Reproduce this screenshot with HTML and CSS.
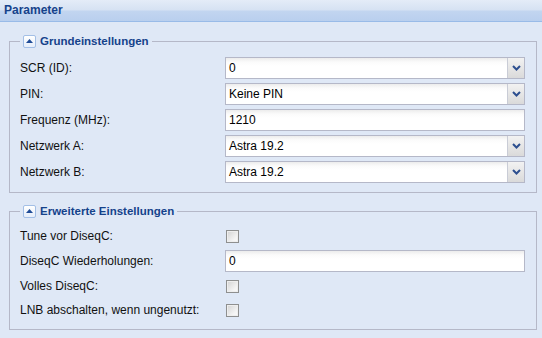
FILE: index.html
```html
<!DOCTYPE html>
<html>
<head>
<meta charset="utf-8">
<link rel="stylesheet" href="styles.css">
</head>
<body>
<div class="panel">
  <div class="panel-header">Parameter</div>
  <div class="panel-body">
    <fieldset class="fs fs-first">
      <legend class="fs-legend">
        <span class="tool"><svg width="7" height="4" viewBox="0 0 7 4"><polygon points="0,4 7,4 3.5,0" fill="#1f4c97"/></svg></span>
        <span class="legend-text">Grundeinstellungen</span>
      </legend>
      <div class="row">
        <span class="lbl">SCR (ID):</span>
        <div class="field combo"><span class="val">0</span><span class="trigger"><svg width="9" height="6" viewBox="0 0 9 6"><polyline points="1,1 4.5,4.5 8,1" fill="none" stroke="#2d4f8f" stroke-width="2"/></svg></span></div>
      </div>
      <div class="row">
        <span class="lbl">PIN:</span>
        <div class="field combo"><span class="val">Keine PIN</span><span class="trigger"><svg width="9" height="6" viewBox="0 0 9 6"><polyline points="1,1 4.5,4.5 8,1" fill="none" stroke="#2d4f8f" stroke-width="2"/></svg></span></div>
      </div>
      <div class="row">
        <span class="lbl">Frequenz (MHz):</span>
        <div class="field text"><span class="val">1210</span></div>
      </div>
      <div class="row">
        <span class="lbl">Netzwerk A:</span>
        <div class="field combo"><span class="val">Astra 19.2</span><span class="trigger"><svg width="9" height="6" viewBox="0 0 9 6"><polyline points="1,1 4.5,4.5 8,1" fill="none" stroke="#2d4f8f" stroke-width="2"/></svg></span></div>
      </div>
      <div class="row">
        <span class="lbl">Netzwerk B:</span>
        <div class="field combo"><span class="val">Astra 19.2</span><span class="trigger"><svg width="9" height="6" viewBox="0 0 9 6"><polyline points="1,1 4.5,4.5 8,1" fill="none" stroke="#2d4f8f" stroke-width="2"/></svg></span></div>
      </div>
    </fieldset>
    <fieldset class="fs fs-second">
      <legend class="fs-legend">
        <span class="tool"><svg width="7" height="4" viewBox="0 0 7 4"><polygon points="0,4 7,4 3.5,0" fill="#1f4c97"/></svg></span>
        <span class="legend-text">Erweiterte Einstellungen</span>
      </legend>
      <div class="row row-check">
        <span class="lbl">Tune vor DiseqC:</span>
        <span class="check"></span>
      </div>
      <div class="row">
        <span class="lbl">DiseqC Wiederholungen:</span>
        <div class="field text"><span class="val">0</span></div>
      </div>
      <div class="row row-check">
        <span class="lbl">Volles DiseqC:</span>
        <span class="check"></span>
      </div>
      <div class="row row-check">
        <span class="lbl">LNB abschalten, wenn ungenutzt:</span>
        <span class="check"></span>
      </div>
    </fieldset>
  </div>
</div>
</body>
</html>
```

FILE: styles.css
```css
* { box-sizing: border-box; }
html, body {
  margin: 0;
  padding: 0;
  background: #dfe8f6;
  font-family: "Liberation Sans", Arial, sans-serif;
  font-size: 12px;
  color: #000;
}
.panel {
  width: 542px;
  height: 338px;
  background: #dfe8f6;
}
.panel-header {
  height: 22px;
  border-bottom: 1px solid #99bbe8;
  background: linear-gradient(#e4ecf8 0, #d6e2f3 10px, #c2d5f0 11px, #b9cfee 21px);
  color: #15428b;
  font-weight: bold;
  font-size: 12px;
  line-height: 21px;
  padding-left: 4px;
}
.panel-body {
  padding: 0 5px 0 9px;
}
.fs {
  margin: 12px 0 0 0;
  border: 1px solid #b5b8c8;
  padding: 9px 11px 5px 10px;
  min-width: 0;
}
.fs-second {
  margin-top: 11px;
  padding-top: 8px;
}
.fs-legend {
  padding: 0 3px;
  height: 14px;
  display: flex;
  align-items: center;
}
.tool {
  width: 13px;
  height: 13px;
  border: 1px solid #a3bfe6;
  border-radius: 2px;
  background: linear-gradient(#ffffff, #e6eefa);
  display: inline-flex;
  align-items: center;
  justify-content: center;
  margin-right: 4px;
}
.tool svg { display: block; margin-top: -1px; }
.legend-text {
  color: #15428b;
  font-weight: bold;
  font-size: 11.5px;
  line-height: 14px;
}
.row {
  display: flex;
  align-items: center;
  height: 22px;
  margin-bottom: 4px;
}
.row-check {
  height: 20px;
}
.lbl {
  width: 205px;
  flex: none;
  color: #111;
}
.field {
  width: 300px;
  height: 22px;
  border: 1px solid #b5b8c8;
  background: linear-gradient(#ececec 0, #fbfbfb 4px, #fff 8px);
  display: flex;
  align-items: stretch;
}
.val {
  flex: 1;
  padding-left: 3px;
  line-height: 20px;
  color: #000;
}
.trigger {
  width: 17px;
  flex: none;
  background: linear-gradient(#f2f2f2, #dadada);
  border-left: 1px solid #c9ccd6;
  display: flex;
  align-items: center;
  justify-content: center;
}
.trigger svg { display: block; }
.check {
  width: 13px;
  height: 13px;
  border: 1px solid #8e8f8f;
  background: linear-gradient(135deg, #d2d2d2, #f4f4f4 70%, #fafafa);
  box-shadow: inset 0 0 0 1px #eeeeee;
  margin-left: 1px;
}
```
